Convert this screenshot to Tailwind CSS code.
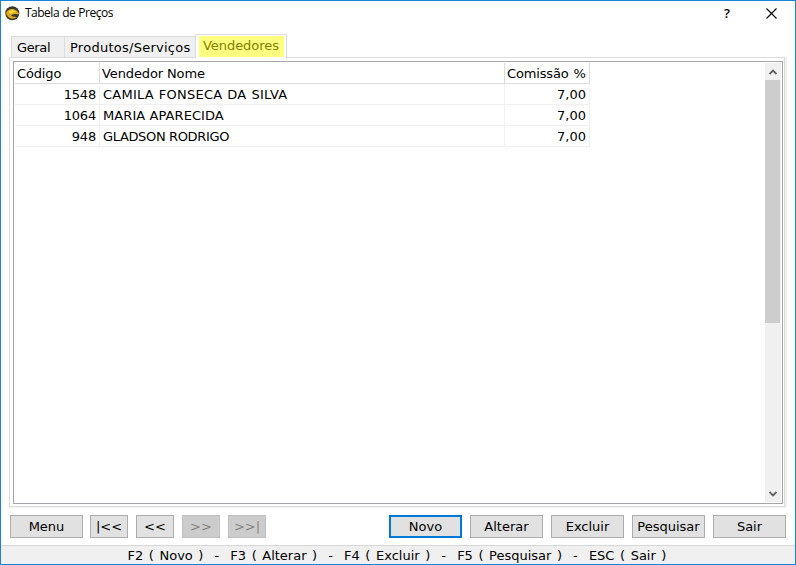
<!DOCTYPE html>
<html lang="pt-BR">
<head>
<meta charset="utf-8">
<title>Tabela de Preços</title>
<script src="https://cdn.jsdelivr.net/npm/@tailwindcss/browser@4"></script>
</head>
<body class="overflow-hidden">
<div class="w-[796px] h-[565px] border border-[#1883d7] bg-white flex flex-col text-black text-[13px] leading-[22px] font-['Verdana','DejaVu_Sans',sans-serif] whitespace-nowrap">
  <header class="h-[33px] shrink-0 flex items-start pl-1 pt-[5px] leading-[20px]">
    <svg class="w-[15px] h-[15px] shrink-0" viewBox="0 0 15 15">
      <circle cx="7.3" cy="7.3" r="7" fill="#37362f"/>
      <path d="M1 7.5C1.5 4.5 5 2.4 8.5 3L11.5 4.6L14 7.2L13.6 8.6L10.5 8L7.5 8.6L6 9.4L7.5 10.6L11.6 11C9.5 13.2 5 13.2 3 10.8Z" fill="#e0aa18"/>
      <path d="M3.6 5.4C6 3.6 8.5 3.8 11.2 6L8 6.6L5 7.8Z" fill="#ffe03c"/>
    </svg>
    <span class="ml-[5px] mt-[-3px] text-[12px] font-['Segoe_UI','Open_Sans',sans-serif] tracking-[-0.5px] [word-spacing:0.5px]">Tabela de Preços</span>
    <span class="ml-auto mt-[-3px] mr-[36px] text-[13px] font-semibold font-['Segoe_UI','Open_Sans',sans-serif]">?</span>
    <svg class="w-[11px] h-[11px] mt-[2px] mr-[18px]" viewBox="0 0 11 11"><path d="M.5.5L10.5 10.5M10.5.5L.5 10.5" stroke="#000" stroke-width="1.1"/></svg>
  </header>

  <nav class="h-[23px] shrink-0 pl-[10px] flex items-end relative z-10">
    <div class="w-[53px] h-[21px] border-t border-l border-[#dcdcdc] bg-[#f0f0f0] pl-[5px] tracking-[-0.35px]">Geral</div>
    <div class="w-[131px] h-[21px] border-t border-l border-[#dcdcdc] bg-[#f0f0f0] pl-[5px] tracking-[0.26px]">Produtos/Serviços</div>
    <div class="w-[92px] h-[24px] -mb-px border-t border-x border-[#dcdcdc] bg-white pl-[3px] pt-px"><div class="w-[85px] h-[21px] bg-[#ffff80] text-[#808000] pl-1 leading-[19px] tracking-[-0.05px]">Vendedores</div></div>
  </nav>

  <main class="ml-2 w-[778px] h-[451px] shrink-0 border-r-2 border-b border-[#f0f0f0]">
    <div class="h-full border border-[#dcdcdc] pt-[3px] pl-[3px] pr-px pb-[2px]">
      <div class="h-full border border-[#a5a5aa] flex pl-px pt-px pr-px pb-px">
        <div class="w-[575px]">
          <div class="flex h-[21px] border-b border-[#dcdcdc]">
            <div class="w-[85px] border-r border-[#dcdcdc] pl-[2px] tracking-[-0.15px]">Código</div>
            <div class="w-[405px] border-r border-[#dcdcdc] pl-[2px] tracking-[-0.12px]">Vendedor Nome</div>
            <div class="w-[85px] border-r border-[#dcdcdc] pl-[2px] tracking-[-0.15px] [word-spacing:1px]">Comissão %</div>
          </div>
          <div class="flex h-[21px] border-b border-[#f0f0f0]">
            <div class="w-[85px] border-r border-[#f0f0f0] pr-[3px] text-right tracking-[-0.2px]">1548</div>
            <div class="w-[405px] border-r border-[#f0f0f0] pl-[3px] tracking-[0.25px] [word-spacing:0.5px]">CAMILA FONSECA DA SILVA</div>
            <div class="w-[85px] border-r border-[#f0f0f0] pr-[3px] text-right">7,00</div>
          </div>
          <div class="flex h-[21px] border-b border-[#f0f0f0]">
            <div class="w-[85px] border-r border-[#f0f0f0] pr-[3px] text-right tracking-[-0.2px]">1064</div>
            <div class="w-[405px] border-r border-[#f0f0f0] pl-[3px] tracking-[0.08px]">MARIA APARECIDA</div>
            <div class="w-[85px] border-r border-[#f0f0f0] pr-[3px] text-right">7,00</div>
          </div>
          <div class="flex h-[21px] border-b border-[#f0f0f0]">
            <div class="w-[85px] border-r border-[#f0f0f0] pr-[3px] text-right tracking-[-0.2px]">948</div>
            <div class="w-[405px] border-r border-[#f0f0f0] pl-[3px] tracking-[-0.35px]">GLADSON RODRIGO</div>
            <div class="w-[85px] border-r border-[#f0f0f0] pr-[3px] text-right">7,00</div>
          </div>
        </div>
        <div class="ml-auto w-[16px] bg-[#f0f0f0] flex flex-col">
          <div class="h-[17px] shrink-0 flex justify-center items-center"><svg class="w-[8px] h-[6px]" viewBox="0 0 8 6"><path d="M.5 5L4 1.5L7.5 5" fill="none" stroke="#606060" stroke-width="1.8"/></svg></div>
          <div class="w-[15px] h-[243px] bg-[#cdcdcd]"></div>
          <div class="h-[17px] mt-auto flex justify-center items-center"><svg class="w-[8px] h-[6px]" viewBox="0 0 8 6"><path d="M.5 1L4 4.5L7.5 1" fill="none" stroke="#606060" stroke-width="1.8"/></svg></div>
        </div>
      </div>
    </div>
  </main>

  <div class="h-[37px] shrink-0 pt-[7px] pl-[9px] pr-[9px] flex gap-2 leading-[21px]">
    <button class="w-[73px] h-[23px] -mr-px border border-[#adadad] bg-[#e1e1e1]">Menu</button>
    <button class="w-[38px] h-[23px] border border-[#adadad] bg-[#e1e1e1]">|&lt;&lt;</button>
    <button class="w-[38px] h-[23px] border border-[#adadad] bg-[#e1e1e1]">&lt;&lt;</button>
    <button class="w-[38px] h-[23px] border border-[#bfbfbf] bg-[#cccccc] text-[#838383]">&gt;&gt;</button>
    <button class="w-[38px] h-[23px] border border-[#bfbfbf] bg-[#cccccc] text-[#838383]">&gt;&gt;|</button>
    <button class="w-[73px] h-[23px] ml-auto border-2 border-[#0078d7] bg-[#e1e1e1] leading-[19px]">Novo</button>
    <button class="w-[73px] h-[23px] border border-[#adadad] bg-[#e1e1e1]">Alterar</button>
    <button class="w-[73px] h-[23px] border border-[#adadad] bg-[#e1e1e1]">Excluir</button>
    <button class="w-[73px] h-[23px] border border-[#adadad] bg-[#e1e1e1]">Pesquisar</button>
    <button class="w-[73px] h-[23px] border border-[#adadad] bg-[#e1e1e1]">Sair</button>
  </div>
  <footer class="h-[19px] shrink-0 border-t border-[#d7d7d7] bg-[#f0f0f0] leading-[19px] text-center pr-[2px] whitespace-pre [word-spacing:1.42px]">F2 ( Novo )  -  F3 ( Alterar )  -  F4 ( Excluir )  -  F5 ( Pesquisar )  -  ESC ( Sair )</footer>
</div>
</body>
</html>
